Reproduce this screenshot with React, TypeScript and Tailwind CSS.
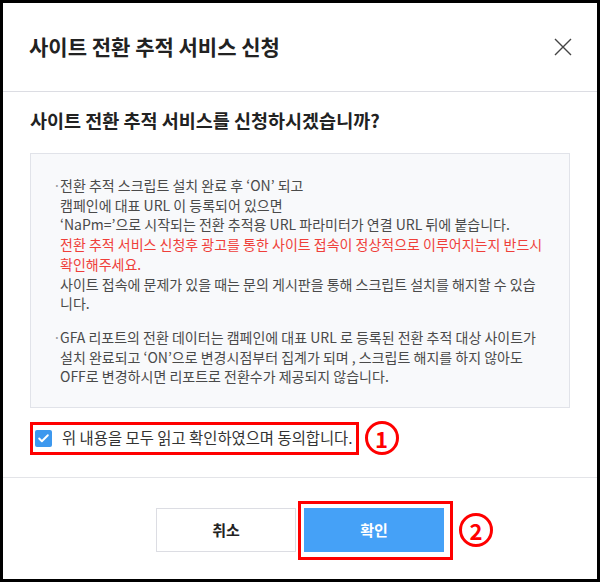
import { Check } from "lucide-react";

const font = { fontFamily: '"Noto Sans CJK KR", "Noto Sans", sans-serif' };

function Marker({ n }: { n: string }) {
    return (
        <span className="flex h-[34px] w-[34px] items-center justify-center rounded-full border-[3px] border-[#f00] text-[22px] font-bold leading-none text-[#f00]">
            {n}
        </span>
    );
}

export default function App() {
    return (
        <div style={font} className="flex h-[582px] w-[600px] flex-col border-[3px] border-black bg-white">
            <div className="flex h-[89px] shrink-0 items-center justify-between border-b border-[#dcdde3] pl-[26px] pr-[25px]">
                <h1 className="text-[21px] font-bold text-[#222]">사이트 전환 추적 서비스 신청</h1>
                <svg width="18" height="18" viewBox="0 0 18 18" className="text-[#444]">
                    <path d="M1 1L17 17M17 1L1 17" stroke="currentColor" strokeWidth="1.4" />
                </svg>
            </div>

            <div className="flex-1 px-[27px] pt-[16px]">
                <h2 className="text-[18.5px] font-bold leading-[24px] text-[#222]">
                    사이트 전환 추적 서비스를 신청하시겠습니까?
                </h2>

                <div className="mt-[21px] border border-[#e1e3e9] bg-[#f8f9fb] pb-[20px] pl-[22px] pr-[18px] pt-[22px] text-[14px] leading-[19.7px] text-[#4a4a4a]">
                    <div className="flex">
                        <span className="w-[7px] shrink-0 text-[#999]">·</span>
                        <p className="whitespace-nowrap">
                            전환 추적 스크립트 설치 완료 후 ‘ON’ 되고
                            <br />
                            캠페인에 대표 URL 이 등록되어 있으면
                            <br />
                            ‘NaPm=’으로 시작되는 전환 추적용 URL 파라미터가 연결 URL 뒤에 붙습니다.
                            <br />
                            <span className="text-[#ef3f3a]">
                                전환 추적 서비스 신청후 광고를 통한 사이트 접속이 정상적으로 이루어지는지 반드시
                                <br />
                                확인해주세요.
                            </span>
                            <br />
                            사이트 접속에 문제가 있을 때는 문의 게시판을 통해 스크립트 설치를 해지할 수 있습
                            <br />
                            니다.
                        </p>
                    </div>
                    <div className="mt-[14px] flex">
                        <span className="w-[7px] shrink-0 text-[#999]">·</span>
                        <p className="whitespace-nowrap">
                            GFA 리포트의 전환 데이터는 캠페인에 대표 URL 로 등록된 전환 추적 대상 사이트가
                            <br />
                            설치 완료되고 ‘ON’으로 변경시점부터 집계가 되며 , 스크립트 해지를 하지 않아도
                            <br />
                            OFF로 변경하시면 리포트로 전환수가 제공되지 않습니다.
                        </p>
                    </div>
                </div>

                <div className="mt-[13px] flex items-center gap-[6px]">
                    <label className="flex h-[33px] items-center gap-[10px] border-[3px] border-[#f00] pl-[2px] pr-[3px]">
                        <span className="flex h-[17px] w-[17px] items-center justify-center rounded-[2px] bg-[#3d98ee]">
                            <Check size={13} strokeWidth={3.5} className="text-white" />
                        </span>
                        <span className="text-[15.4px] text-[#333]">위 내용을 모두 읽고 확인하였으며 동의합니다.</span>
                    </label>
                    <Marker n="1" />
                </div>
            </div>

            <div className="flex h-[102px] shrink-0 justify-center gap-[8px] border-t border-[#e3e4e8] pt-[30px]">
                <button className="h-[44px] w-[140px] border border-[#dcdde3] bg-white text-[15px] font-bold text-[#222]">
                    취소
                </button>
                <div className="relative h-[44px]">
                    <button className="h-[44px] w-[140px] bg-[#45a1f7] text-[15px] font-bold text-white">확인</button>
                    <span className="pointer-events-none absolute -bottom-[8px] -left-[6px] -right-[9px] -top-[7px] border-[3px] border-[#f00]" />
                    <span className="absolute left-[155px] top-[5px]">
                        <Marker n="2" />
                    </span>
                </div>
            </div>
        </div>
    );
}
